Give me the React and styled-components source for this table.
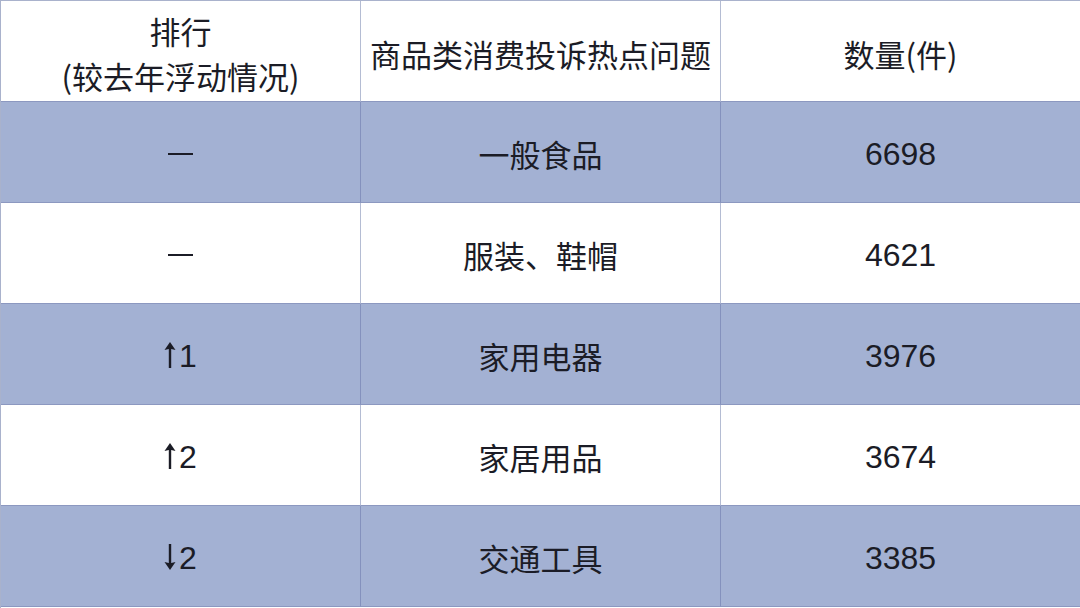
import React from "react";
import styled, { createGlobalStyle } from "styled-components";

const Global = createGlobalStyle`
  html, body { margin: 0; padding: 0; background: #ffffff; }
  body { font-family: "Liberation Sans", "Noto Sans CJK SC", sans-serif; }
`;

const Table = styled.div`
  width: 1080px;
  height: 608px;
  box-sizing: border-box;
  display: grid;
  grid-template-columns: 360px 360px 360px;
  grid-template-rows: 101px repeat(5, 101px);
  border-top: 1px solid #a9b2cc;
  border-left: 1px solid #a9b2cc;
  overflow: hidden;
`;

const Cell = styled.div`
  box-sizing: border-box;
  display: flex;
  flex-direction: ${(p) => (p.$stack ? "column" : "row")};
  align-items: center;
  justify-content: center;
  gap: ${(p) => (p.$stack ? "0" : "3px")};
  padding-top: ${(p) => (p.$head ? "4px" : "3px")};
  border-right: 1px solid ${(p) => (p.$shade ? "#8491bd" : "#b4bcd3")};
  border-bottom: 1px solid #8c98c0;
  background: ${(p) => (p.$shade ? "#a3b1d3" : "#ffffff")};
  color: #1b1c26;
  font-size: 32px;
  line-height: 44px;
  font-family: "Liberation Sans", "Noto Sans CJK SC", sans-serif;
`;

const HeadLine = styled.span`
  display: block;
  font-family: "Noto Sans CJK SC", sans-serif;
  font-size: 31px;
  line-height: 45px;
`;

const CJK = styled.span`
  font-family: "Noto Sans CJK SC", sans-serif;
  font-size: 31px;
`;

const Dash = styled.span`
  display: block;
  width: 25px;
  height: 2px;
  background: #1b1c26;
`;

const ArrowSvg = styled.svg`
  display: block;
  width: 12px;
  height: 26px;
  margin-top: -2px;
`;

function Arrow({ down }) {
  return (
    <ArrowSvg viewBox="0 0 12 26">
      <g transform={down ? "rotate(180 6 13)" : undefined} fill="#1b1c26">
        <path d="M6 0 L11.5 8 L7.2 7 L7.2 26 L4.8 26 L4.8 7 L0.5 8 Z" />
      </g>
    </ArrowSvg>
  );
}

const rows = [
  { dir: null, step: "", name: "一般食品", count: "6698" },
  { dir: null, step: "", name: "服装、鞋帽", count: "4621" },
  { dir: "up", step: "1", name: "家用电器", count: "3976" },
  { dir: "up", step: "2", name: "家居用品", count: "3674" },
  { dir: "down", step: "2", name: "交通工具", count: "3385" },
];

export default function App() {
  return (
    <>
      <Global />
      <Table>
        <Cell $stack $head>
          <HeadLine>排行</HeadLine>
          <HeadLine>(较去年浮动情况)</HeadLine>
        </Cell>
        <Cell $stack $head>
          <HeadLine>商品类消费投诉热点问题</HeadLine>
        </Cell>
        <Cell $stack $head>
          <HeadLine>数量(件)</HeadLine>
        </Cell>
        {rows.map((r, i) => {
          const shade = i % 2 === 0;
          return (
            <React.Fragment key={r.name}>
              <Cell $shade={shade}>
                {r.dir ? (
                  <>
                    <Arrow down={r.dir === "down"} />
                    <span>{r.step}</span>
                  </>
                ) : (
                  <Dash />
                )}
              </Cell>
              <Cell $shade={shade}>
                <CJK>{r.name}</CJK>
              </Cell>
              <Cell $shade={shade}>{r.count}</Cell>
            </React.Fragment>
          );
        })}
      </Table>
    </>
  );
}
